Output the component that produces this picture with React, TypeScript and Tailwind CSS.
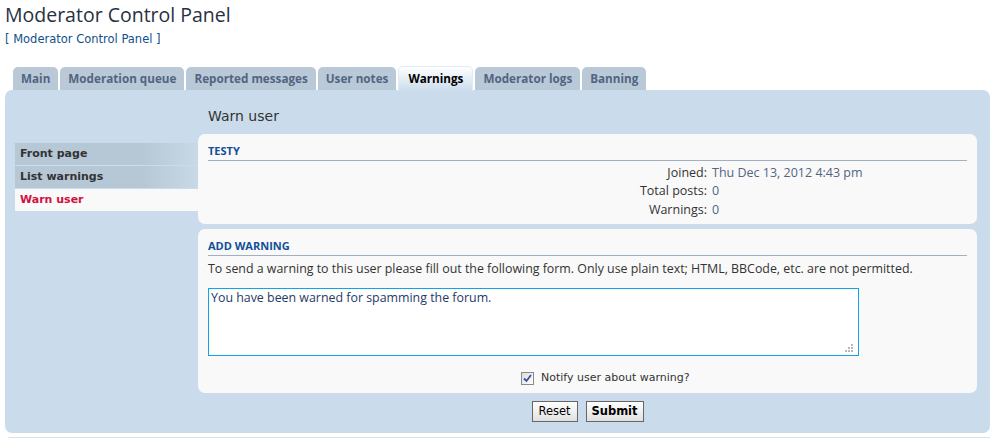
import React from 'react';

const tabs = ['Main', 'Moderation queue', 'Reported messages', 'User notes', 'Warnings', 'Moderator logs', 'Banning'];
const menu = ['Front page', 'List warnings', 'Warn user'];

const stats = [
  { label: 'Joined:', value: 'Thu Dec 13, 2012 4:43 pm' },
  { label: 'Total posts:', value: '0' },
  { label: 'Warnings:', value: '0' },
];

const App: React.FC = () => {
  return (
    <div className="w-[995px] h-[438px] bg-white overflow-hidden text-[#333] font-['DejaVu_Sans',Verdana,sans-serif]">
      <div className="px-[5px]">
        <h1 className="pt-[1px] h-[28px] text-[19.5px] leading-[28px] text-[#28313f] font-['Open_Sans',sans-serif]">
          Moderator Control Panel
        </h1>
        <p className="mt-[4px] text-[11.5px] leading-[14px] text-[#105289]">[ Moderator Control Panel ]</p>

        {/* tabs */}
        <div className="flex items-end gap-[2px] pl-[8px] mt-[20px] h-[24px] font-['Open_Sans',sans-serif]">
          {tabs.map((t) => {
            const active = t === 'Warnings';
            return active ? (
              <div
                key={t}
                className="h-[25px] px-[9px] flex items-center rounded-t-[5px] border border-b-0 border-[#e4ecf3] bg-gradient-to-b from-white to-[#cadceb] text-[11.7px] font-bold text-black relative top-[1px]"
              >
                {t}
              </div>
            ) : (
              <div
                key={t}
                className="h-[23px] px-[8px] flex items-center rounded-t-[5px] bg-[#b9c9d8] text-[11.7px] font-bold text-[#536482]"
              >
                {t}
              </div>
            );
          })}
        </div>

        {/* panel */}
        <div className="h-[343px] rounded-[7px] bg-[#cadceb] flex">
          <div className="ml-[10px] mt-[53px] w-[183px] flex flex-col gap-[1px]">
            {menu.map((m) => {
              const active = m === 'Warn user';
              return (
                <div
                  key={m}
                  className={
                    active
                      ? 'h-[22px] pl-[5px] flex items-center bg-[#f9f9f9] text-[11px] font-bold text-[#d31141]'
                      : 'h-[22px] pl-[5px] flex items-center bg-gradient-to-r from-[#b6c7d6] from-70% to-[#c8d9e8] text-[11px] font-bold text-[#333]'
                  }
                >
                  {m}
                </div>
              );
            })}
          </div>

          <div className="w-[779px] flex flex-col">
            <h2 className="pl-[10px] mt-[16px] h-[28px] text-[14px] leading-[20px] text-[#333]">Warn user</h2>

            <div className="h-[90px] rounded-[7px] bg-[#f9f9f9] px-[10px] pt-[10px]">
              <h3 className="text-[11px] leading-[14px] font-bold text-[#115098] font-['Open_Sans',sans-serif] border-b border-[#a0b0c0] pb-[2px]">
                TESTY
              </h3>
              <div className="mt-[3px] font-['Open_Sans',sans-serif] text-[12.5px]">
                {stats.map((s) => (
                  <div key={s.label} className="flex h-[18.5px] items-center">
                    <div className="w-[499px] text-right text-[#333]">{s.label}</div>
                    <div className="pl-[5px] text-[#536482]">{s.value}</div>
                  </div>
                ))}
              </div>
            </div>

            <div className="mt-[5px] h-[164px] rounded-[7px] bg-[#f9f9f9] px-[10px] pt-[10px]">
              <h3 className="text-[11px] leading-[14px] font-bold text-[#115098] font-['Open_Sans',sans-serif] border-b border-[#a0b0c0] pb-[2px]">
                ADD WARNING
              </h3>
              <p className="mt-[5px] text-[12.4px] leading-[16px] text-[#333] font-['Open_Sans',sans-serif]">
                To send a warning to this user please fill out the following form. Only use plain text; HTML, BBCode, etc. are not permitted.
              </p>
              <div className="relative mt-[11px] w-[651px] h-[68px]">
                <textarea
                  className="block w-full h-full resize-none border border-[#11a3ea] bg-white px-[2px] py-[1px] text-[12.4px] leading-[16px] text-[#1f3a68] font-['Open_Sans',sans-serif] outline-none"
                  defaultValue="You have been warned for spamming the forum."
                />
                <svg className="absolute right-[6px] bottom-[4px]" width="8" height="8" viewBox="0 0 8 8">
                  <rect x="6" y="0" width="2" height="2" fill="#b8b8b8" />
                  <rect x="3" y="3" width="2" height="2" fill="#b8b8b8" />
                  <rect x="6" y="3" width="2" height="2" fill="#b8b8b8" />
                  <rect x="0" y="6" width="2" height="2" fill="#b8b8b8" />
                  <rect x="3" y="6" width="2" height="2" fill="#b8b8b8" />
                  <rect x="6" y="6" width="2" height="2" fill="#b8b8b8" />
                </svg>
              </div>
              <label className="mt-[14px] ml-[313px] flex items-center gap-[7px] text-[11px] text-[#333]">
                <span className="w-[13px] h-[13px] border border-[#8a8a8a] bg-gradient-to-br from-[#dcdcdc] to-white flex items-center justify-center">
                  <svg width="9" height="9" viewBox="0 0 9 9">
                    <path d="M1 4.5 L3.5 7 L8 1" stroke="#3c4f9e" strokeWidth="1.8" fill="none" />
                  </svg>
                </span>
                Notify user about warning?
              </label>
            </div>

            <div className="mt-[8px] flex justify-center gap-[8px] text-[11.5px]">
              <button className="h-[21px] w-[46px] border border-[#666] bg-gradient-to-b from-white to-[#e0e0e0] text-[#000]">
                Reset
              </button>
              <button className="h-[21px] w-[58px] border border-[#666] bg-gradient-to-b from-white to-[#e0e0e0] font-bold text-[#000]">
                Submit
              </button>
            </div>
          </div>
        </div>
        <div className="mt-[4px] ml-[3px] h-[1px] bg-[#d8e2ec]" />
      </div>
    </div>
  );
};

export default App;
